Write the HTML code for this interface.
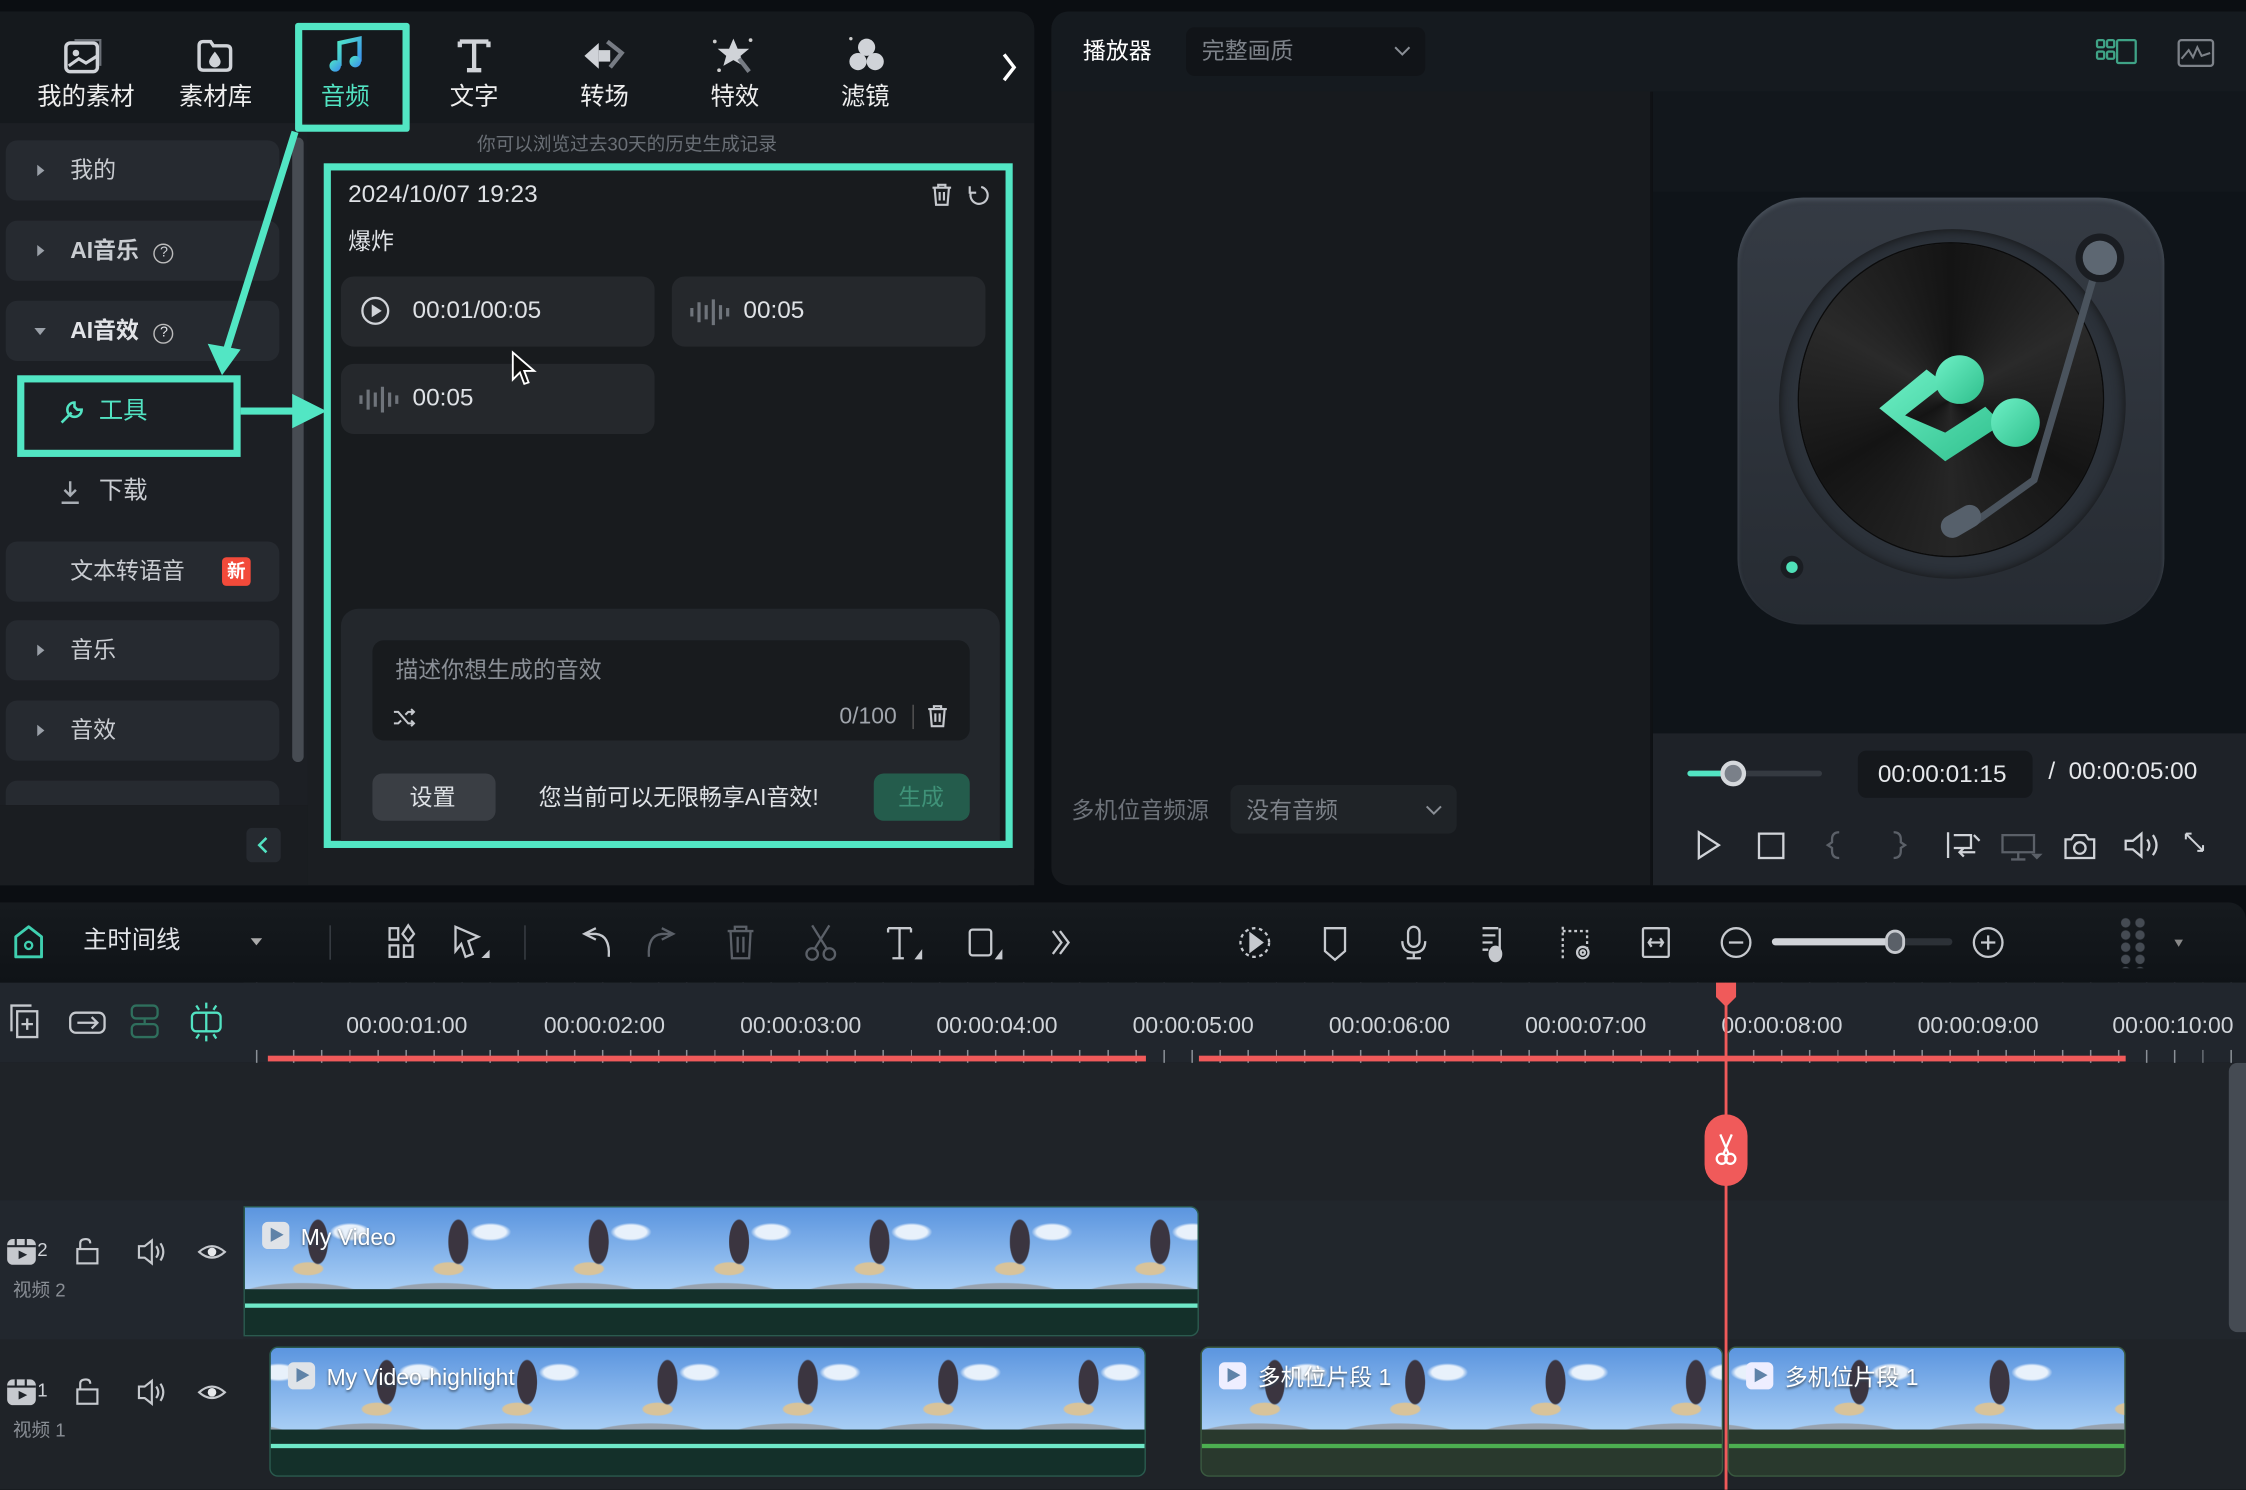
<!DOCTYPE html>
<html><head><meta charset="utf-8">
<style>
*{margin:0;padding:0;box-sizing:border-box}
html,body{width:2246px;height:1490px;overflow:hidden;background:#0b0e12}
#s{position:absolute;left:0;top:0;width:1568px;height:1040px;transform:scale(1.43240);transform-origin:0 0;font-family:"Liberation Sans","Noto Sans CJK SC",sans-serif;color:#d6d9de;line-height:1.2}
.a{position:absolute}
.t{position:absolute;white-space:nowrap;line-height:1.2}
svg{position:absolute;overflow:visible}
.side{position:absolute;left:4px;width:191px;height:42px;background:#262a30;border-radius:8px}
.side .t{left:45px;top:12px;font-size:16px;color:#c9ccd1}
.tri{position:absolute;left:22px;top:17px;width:0;height:0;border-left:5px solid #9aa0a8;border-top:4px solid transparent;border-bottom:4px solid transparent}
.card{position:absolute;background:#25282c;border-radius:9px;width:219px;height:49px}
.card .t{left:50px;top:14px;font-size:17px;color:#dfe2e6}
.th{position:absolute;overflow:hidden;
background:
radial-gradient(ellipse 9px 20px at 52% 42%,#3b3540 75%,transparent 80%) 0 0/98px 100%,
radial-gradient(ellipse 14px 6px at 45% 75%,#d8c39a 70%,transparent 80%) 0 0/98px 100%,
radial-gradient(ellipse 18px 8px at 75% 30%,#e8f1fb 60%,transparent 80%) 0 0/98px 100%,
radial-gradient(ellipse 50px 12px at 40% 112%,#98a2ae 90%,transparent 95%) 0 0/98px 100%,
linear-gradient(#5b95df,#a8cef5)}
.lbl{position:absolute;left:12px;top:10px;font-size:16px;color:#fff;text-shadow:0 1px 2px #345;line-height:1.2}
.pb{display:inline-block;width:19px;height:19px;background:#dfe3e8;border-radius:4px;vertical-align:-3px;margin-right:8px;position:relative}
.pb:after{content:"";position:absolute;left:6px;top:4px;border-left:9px solid #5f83a8;border-top:5.5px solid transparent;border-bottom:5.5px solid transparent}
.rl{position:absolute;top:707px;font-size:16px;color:#d0d4d9;transform:translateX(-50%);line-height:1.2}
</style></head><body><div id="s">

<!-- LEFT PANEL -->
<div class="a" style="left:0;top:8px;width:722px;height:610px;background:#1c1f24;border-radius:0 12px 12px 0"></div>
<div class="a" style="left:0;top:8px;width:722px;height:78px;background:#15191d;border-radius:0 12px 0 0"></div>
<!-- tabs -->
<svg style="left:44px;top:26px" width="28" height="26" viewBox="0 0 28 26"><rect x="2" y="4" width="22" height="20" rx="3" fill="none" stroke="#d0d3d8" stroke-width="2.4"/><circle cx="9" cy="11" r="2.3" fill="#d0d3d8"/><path d="M4 20 L11 15 L16 18 L24 13" fill="none" stroke="#d0d3d8" stroke-width="2.2"/><path d="M8 2 H26 V20" fill="none" stroke="#6a6f76" stroke-width="1.6"/></svg>
<div class="t" style="left:26px;top:58px;font-size:17px;color:#eee">我的素材</div>
<svg style="left:137px;top:26px" width="26" height="26" viewBox="0 0 26 26"><path d="M2 6 Q2 3 5 3 H10 L12 6 H21 Q24 6 24 9 V20 Q24 23 21 23 H5 Q2 23 2 20 Z" fill="none" stroke="#d0d3d8" stroke-width="2.4"/><path d="M13 10 Q9 15 9 17 A4 4 0 0 0 17 17 Q17 15 13 10Z" fill="#d0d3d8"/></svg>
<div class="t" style="left:125px;top:58px;font-size:17px;color:#eee">素材库</div>
<svg style="left:228px;top:25px" width="28" height="28" viewBox="0 0 28 28"><defs><linearGradient id="mg" x1="0" y1="0" x2="1" y2="1"><stop offset="0" stop-color="#4fe6c6"/><stop offset="1" stop-color="#3a8cf0"/></linearGradient></defs><path d="M9 21 V5 L23 2 V18" fill="none" stroke="url(#mg)" stroke-width="3"/><ellipse cx="6" cy="21" rx="4" ry="4" fill="url(#mg)"/><ellipse cx="20" cy="18" rx="4" ry="4" fill="url(#mg)"/></svg>
<div class="t" style="left:224px;top:58px;font-size:17px;color:#52e3c2">音频</div>
<svg style="left:318px;top:26px" width="26" height="26"><path d="M3 3 H23 M13 3 V23 M8 23 H18 M3 3 V7 M23 3 V7" stroke="#d0d3d8" stroke-width="3" fill="none"/></svg>
<div class="t" style="left:314px;top:58px;font-size:17px;color:#eee">文字</div>
<svg style="left:406px;top:25px" width="34" height="28"><path d="M2 14 L12 5 V23 Z" fill="#d0d3d8"/><path d="M12 10 H20 V18 H12" fill="#d0d3d8"/><path d="M18 4 L28 12 L20 22" fill="none" stroke="#777c84" stroke-width="3"/></svg>
<div class="t" style="left:405px;top:58px;font-size:17px;color:#eee">转场</div>
<svg style="left:496px;top:24px" width="32" height="30"><path d="M16 3 L19 10 L27 10 L21 15 L23 22 L16 18 L9 22 L11 15 L5 10 L13 10Z" fill="#d0d3d8"/><path d="M20 17 L27 26" stroke="#777c84" stroke-width="3"/><circle cx="3" cy="5" r="1.3" fill="#ccc"/><circle cx="28" cy="4" r="1.3" fill="#ccc"/><circle cx="6" cy="25" r="1.3" fill="#ccc"/></svg>
<div class="t" style="left:496px;top:58px;font-size:17px;color:#eee">特效</div>
<svg style="left:590px;top:24px" width="30" height="30"><circle cx="15" cy="9" r="6" fill="#d0d3d8"/><circle cx="9" cy="19" r="6" fill="#d0d3d8"/><circle cx="21" cy="19" r="6" fill="#d0d3d8"/><circle cx="4" cy="3" r="1.2" fill="#ccc"/></svg>
<div class="t" style="left:587px;top:58px;font-size:17px;color:#eee">滤镜</div>
<svg style="left:698px;top:36px" width="14" height="22"><path d="M3 2 L10 11 L3 20" fill="none" stroke="#fff" stroke-width="2.4"/></svg>

<!-- sidebar -->
<div class="a" style="left:0;top:86px;width:215px;height:532px;background:#1c1f24"></div>
<div class="side" style="top:98px"><div class="tri"></div><div class="t">我的</div></div>
<div class="side" style="top:154px"><div class="tri"></div><div class="t" style="font-weight:bold">AI音乐 <span style="font-weight:normal;display:inline-block;width:14px;height:14px;border:1.5px solid #bbb;border-radius:50%;font-size:10px;text-align:center;line-height:11px;margin-left:6px;vertical-align:1px">?</span></div></div>
<div class="side" style="top:210px"><div class="tri" style="border-left:4px solid transparent;border-right:4px solid transparent;border-top:5px solid #9aa0a8;border-bottom:0;top:19px;left:20px"></div><div class="t" style="font-weight:bold;color:#e2e4e8">AI音效 <span style="font-weight:normal;display:inline-block;width:14px;height:14px;border:1.5px solid #bbb;border-radius:50%;font-size:10px;text-align:center;line-height:11px;margin-left:6px;vertical-align:1px">?</span></div></div>
<div class="a" style="left:12px;top:262px;width:156px;height:57px;border:5px solid #52e6c4;background:#1c1f24"></div>
<svg style="left:40px;top:278px" width="20" height="20"><path d="M3 17 L10 10 M12 3 A5 5 0 1 0 17 8 L14 8 L12 6 Z" fill="none" stroke="#52e3c2" stroke-width="1.8"/></svg>
<div class="t" style="left:69px;top:277px;font-size:17px;color:#52e3c2">工具</div>
<svg style="left:40px;top:334px" width="18" height="20"><path d="M9 2 V11 M5 8 L9 12 L13 8 M3 17 H15" fill="none" stroke="#a8adb4" stroke-width="1.7"/></svg>
<div class="t" style="left:69px;top:333px;font-size:17px;color:#c9ccd1">下载</div>
<div class="side" style="top:378px"><div class="t">文本转语音</div><div class="a" style="left:151px;top:11px;width:20px;height:20px;background:#f24a3a;border-radius:3px;color:#fff;font-size:13px;text-align:center;line-height:20px;font-weight:bold">新</div></div>
<div class="side" style="top:433px"><div class="tri"></div><div class="t">音乐</div></div>
<div class="side" style="top:489px"><div class="tri"></div><div class="t">音效</div></div>
<div class="side" style="top:545px;height:17px;border-radius:8px 8px 0 0"></div>
<div class="a" style="left:204px;top:96px;width:8px;height:436px;background:#474c53;border-radius:4px"></div>
<div class="a" style="left:0;top:562px;width:215px;height:56px;background:#1a1d21"></div>
<div class="a" style="left:172px;top:578px;width:24px;height:24px;background:#262a30;border-radius:4px"></div>
<svg style="left:179px;top:584px" width="10" height="12"><path d="M7 1 L2 6 L7 11" stroke="#52e3c2" stroke-width="1.8" fill="none"/></svg>

<!-- main content -->
<div class="a" style="left:215px;top:86px;width:507px;height:532px;background:#1b1e22"></div>
<!-- tab highlight box (on top) -->
<div class="a" style="left:206px;top:16px;width:80px;height:76px;border:5px solid #52e6c4;border-radius:2px"></div>
<div class="t" style="left:333px;top:93px;font-size:13px;color:#6a6f76">你可以浏览过去30天的历史生成记录</div>
<div class="a" style="left:226px;top:114px;width:481px;height:478px;border:5px solid #52e6c4;background:#181b1e"></div>
<div class="t" style="left:243px;top:126px;font-size:17px;color:#dfe2e6">2024/10/07 19:23</div>
<svg style="left:649px;top:127px" width="42" height="18"><path d="M2 4 H15 M6 4 V2 H11 V4 M3.5 4 L4.5 16 H12.5 L13.5 4 M7 7 V13 M10 7 V13" fill="none" stroke="#c6c9ce" stroke-width="1.5"/><path d="M36 3.5 A6 6 0 1 1 29 7 M28 3 V7.5 H32.5" fill="none" stroke="#c6c9ce" stroke-width="1.5"/></svg>
<div class="t" style="left:243px;top:160px;font-size:16px;color:#dfe2e6">爆炸</div>
<div class="card" style="left:238px;top:193px"><svg style="left:14px;top:14px" width="22" height="22"><circle cx="10" cy="10" r="9" fill="none" stroke="#d0d3d8" stroke-width="1.6"/><path d="M7.5 5.5 L14.5 10 L7.5 14.5Z" fill="#d0d3d8"/></svg><div class="t">00:01/00:05</div></div>
<div class="card" style="left:469px;top:193px"><svg style="left:12px;top:15px" width="28" height="20"><path d="M2 7 V13 M7 3 V17 M12 5 V15 M17 1 V19 M22 5 V15 M27 7 V13" stroke="#6f747b" stroke-width="2.2"/></svg><div class="t">00:05</div></div>
<div class="card" style="left:238px;top:254px"><svg style="left:12px;top:15px" width="28" height="20"><path d="M2 7 V13 M7 3 V17 M12 5 V15 M17 1 V19 M22 5 V15 M27 7 V13" stroke="#6f747b" stroke-width="2.2"/></svg><div class="t">00:05</div></div>
<svg style="left:357px;top:245px" width="20" height="28"><path d="M1 1 L1 20 L6 15 L9 23 L12 22 L9 14 L16 14 Z" fill="#111" stroke="#fff" stroke-width="1.3"/></svg>
<div class="a" style="left:238px;top:425px;width:460px;height:162px;background:#23272c;border-radius:12px 12px 0 0"></div>
<div class="a" style="left:260px;top:447px;width:417px;height:70px;background:#181b1e;border-radius:8px"></div>
<div class="t" style="left:276px;top:459px;font-size:16px;color:#8a8f96">描述你想生成的音效</div>
<svg style="left:274px;top:493px" width="16" height="16"><path d="M1 4 H4 L11 12 H15 M1 12 H4 L6 10 M9 6 L11 4 H15 M13 2 L15 4 L13 6 M13 10 L15 12 L13 14" fill="none" stroke="#c6c9ce" stroke-width="1.4"/></svg>
<div class="t" style="left:586px;top:491px;font-size:16px;color:#a0a5ac">0/100</div>
<div class="a" style="left:637px;top:492px;width:1px;height:17px;background:#555"></div>
<svg style="left:646px;top:491px" width="18" height="18"><path d="M2 4 H15 M6 4 V2 H11 V4 M3.5 4 L4.5 16 H12.5 L13.5 4 M7 7 V13 M10 7 V13" fill="none" stroke="#c6c9ce" stroke-width="1.5"/></svg>
<div class="a" style="left:260px;top:540px;width:86px;height:33px;background:#3a3e44;border-radius:7px"></div>
<div class="t" style="left:286px;top:548px;font-size:16px;color:#dfe2e6">设置</div>
<div class="t" style="left:376px;top:548px;font-size:16px;color:#dfe2e6">您当前可以无限畅享AI音效!</div>
<div class="a" style="left:610px;top:540px;width:67px;height:33px;background:#245c4c;border-radius:7px"></div>
<div class="t" style="left:627px;top:548px;font-size:16px;color:#3f9278">生成</div>

<!-- arrows -->
<svg style="left:0;top:0" width="240" height="320"><path d="M206 92 L157 248" stroke="#52e6c4" stroke-width="5"/><path d="M145 240 L155 262 L168 244 Z" fill="#52e6c4"/><path d="M168 287 L210 287" stroke="#52e6c4" stroke-width="5"/><path d="M204 275 L228 287 L204 299 Z" fill="#52e6c4"/></svg>

<!-- PLAYER -->
<div class="a" style="left:734px;top:8px;width:834px;height:610px;background:#171a1e;border-radius:12px 0 0 12px;overflow:hidden"></div>
<div class="a" style="left:734px;top:8px;width:834px;height:56px;background:#151a1f;border-radius:12px 0 0 0"></div>
<div class="t" style="left:756px;top:27px;font-size:16px;color:#fff">播放器</div>
<div class="a" style="left:828px;top:19px;width:167px;height:34px;background:#111418;border-radius:6px"></div>
<div class="t" style="left:839px;top:27px;font-size:16px;color:#7d8289">完整画质</div>
<svg style="left:973px;top:32px" width="12" height="8"><path d="M1 1 L6 6 L11 1" stroke="#8a8f96" stroke-width="1.4" fill="none"/></svg>
<svg style="left:1463px;top:27px" width="30" height="20"><g fill="none" stroke="#3fa386" stroke-width="1.6"><rect x="1" y="1" width="5" height="5" rx="1"/><rect x="8" y="1" width="5" height="5" rx="1"/><rect x="1" y="9" width="5" height="5" rx="1"/><rect x="8" y="9" width="5" height="5" rx="1"/><rect x="15" y="1" width="13" height="16" rx="1"/></g></svg>
<svg style="left:1520px;top:27px" width="26" height="20"><rect x="1" y="1" width="24" height="18" rx="2" fill="none" stroke="#7d8289" stroke-width="1.6"/><path d="M3 14 L8 8 L11 13 L14 6 L17 12 L23 10" fill="none" stroke="#7d8289" stroke-width="1.4"/></svg>
<div class="a" style="left:1152px;top:64px;width:2px;height:554px;background:#0f1215"></div>
<div class="a" style="left:1154px;top:64px;width:414px;height:448px;background:#0f1419"></div>
<div class="a" style="left:1154px;top:64px;width:414px;height:70px;background:#12171c"></div>
<!-- turntable -->
<div class="a" style="left:1213px;top:138px;width:298px;height:298px;border-radius:46px;background:linear-gradient(#353b44,#262b32);box-shadow:inset 0 2px 3px #48505a"></div>
<div class="a" style="left:1242px;top:160px;width:242px;height:244px;border-radius:50%;background:#2c323a;box-shadow:inset 0 0 8px #111"></div>
<div class="a" style="left:1256px;top:170px;width:212px;height:218px;border-radius:50%;background:conic-gradient(#141414,#2a2a2a,#141414,#262626,#141414,#2a2a2a,#141414);box-shadow:0 0 0 1px #0b0b0b"></div>
<svg style="left:1300px;top:240px" width="140" height="100"><defs><linearGradient id="ng" x1="0" y1="0" x2="1" y2="1"><stop offset="0" stop-color="#6ef0c6"/><stop offset="1" stop-color="#2fbf8c"/></linearGradient></defs><path d="M12 45 L45 18 L58 28 L30 50 L58 62 L86 44 L98 56 L58 82 Z" fill="url(#ng)"/><circle cx="68" cy="25" r="17" fill="url(#ng)"/><circle cx="107" cy="55" r="17" fill="url(#ng)"/></svg>
<svg style="left:1340px;top:160px" width="150" height="230"><path d="M125 22 L80 175 L38 205" stroke="#4a535d" stroke-width="5" fill="none"/><circle cx="126" cy="20" r="17" fill="#1a1d22"/><circle cx="126" cy="20" r="12" fill="#5d6772"/><rect x="14" y="196" width="30" height="16" rx="8" fill="#56606b" transform="rotate(-30 29 204)"/></svg>
<div class="a" style="left:1243px;top:388px;width:16px;height:16px;border-radius:50%;background:#1a1d22"></div>
<div class="a" style="left:1247px;top:392px;width:8px;height:8px;border-radius:50%;background:#4fe0b8"></div>
<!-- controls -->
<div class="a" style="left:1154px;top:512px;width:414px;height:106px;background:#1e2228"></div>
<div class="a" style="left:1178px;top:538px;width:94px;height:4px;background:#353a41;border-radius:2px"></div>
<div class="a" style="left:1178px;top:538px;width:32px;height:4px;background:#52e3c2;border-radius:2px"></div>
<div class="a" style="left:1201px;top:531px;width:18px;height:18px;border-radius:50%;background:#7a8089;border:3px solid #d5d8dc"></div>
<div class="a" style="left:1297px;top:524px;width:122px;height:33px;background:#15181c;border-radius:6px"></div>
<div class="t" style="left:1311px;top:531px;font-size:17px;color:#e6e8eb">00:00:01:15</div>
<div class="t" style="left:1430px;top:529px;font-size:17px;color:#e6e8eb">/&nbsp; 00:00:05:00</div>
<svg style="left:1182px;top:578px" width="370" height="26"><g fill="none" stroke="#d0d3d8" stroke-width="1.6"><path d="M4 3 L18 12 L4 21Z"/><rect x="46" y="4" width="17" height="17"/><path d="M102 3 Q97 3 97 8 V10 L94 12 L97 14 V16 Q97 21 102 21" stroke="#5b6068"/><path d="M140 3 Q145 3 145 8 V10 L148 12 L145 14 V16 Q145 21 140 21" stroke="#5b6068"/><path d="M178 3 V21 M182 5 H194 V14 H182 M186 17 H197 M189 14 L186 17 L189 20 M196 5 L200 9"/><path d="M216 5 H238 V17 H216Z M227 17 V22 M222 22 H232" stroke="#5b6068"/><path d="M236 18 L240 22 L244 18Z" fill="#5b6068" stroke="none"/><path d="M260 8 H264 L266 5 H274 L276 8 H280 V21 H260Z"/><circle cx="270" cy="14" r="4"/><path d="M302 9 H307 L313 4 V20 L307 15 H302Z M317 8 Q320 12 317 16 M321 5 Q326 12 321 19"/><path d="M344 4 L356 16 M344 4 V8 M344 4 H348 M356 16 V12 M356 16 H352" stroke-width="1.4"/></g></svg>
<div class="t" style="left:748px;top:557px;font-size:16px;color:#6d7279">多机位音频源</div>
<div class="a" style="left:859px;top:548px;width:158px;height:34px;background:#1f2327;border-radius:6px"></div>
<div class="t" style="left:870px;top:557px;font-size:16px;color:#7d8289">没有音频</div>
<svg style="left:995px;top:562px" width="12" height="8"><path d="M1 1 L6 6 L11 1" stroke="#8a8f96" stroke-width="1.4" fill="none"/></svg>

<!-- TIMELINE TOOLBAR -->
<div class="a" style="left:0;top:630px;width:1568px;height:56px;background:linear-gradient(#161a1e,#0f1317);border-radius:0 12px 0 0"></div>
<svg style="left:9px;top:645px" width="22" height="26"><path d="M11 2 L20 9 V23 H2 V9 Z" fill="none" stroke="#3fd0b0" stroke-width="2" stroke-linejoin="round"/><circle cx="11" cy="15" r="2.5" fill="none" stroke="#3fd0b0" stroke-width="1.6"/></svg>
<div class="t" style="left:58px;top:647px;font-size:17px;color:#e2e4e8">主时间线</div>
<div class="a" style="left:175px;top:655px;border-top:5px solid #aaa;border-left:4px solid transparent;border-right:4px solid transparent"></div>
<div class="a" style="left:230px;top:646px;width:1px;height:24px;background:#3a3f45"></div>
<div class="a" style="left:366px;top:646px;width:1px;height:24px;background:#3a3f45"></div>
<svg style="left:270px;top:644px" width="490" height="30"><g fill="none" stroke="#c6c9ce" stroke-width="1.6"><rect x="2" y="4" width="6" height="8"/><rect x="2" y="16" width="6" height="8"/><rect x="12" y="16" width="6" height="8"/><path d="M15 2 L19 8 L15 13 L11 8Z"/><path d="M48 3 L64 10 L57 13 L60 22 L55 24 L52 15 L48 20Z"/><path d="M68 24 L71 24 L71 21Z" fill="#c6c9ce"/><path d="M146 12 L138 8 L146 4 M138 8 H146 Q156 9 155 24"/><path d="M192 12 L200 8 L192 4 M200 8 H192 Q182 9 183 24" stroke="#5b6068"/><path d="M238 6 H256 M243 6 V3 H251 V6 M240 6 L241 25 H253 L254 6 M245 10 V21 M249 10 V21" stroke="#5b6068"/><path d="M297 2 L307 18 M309 2 L299 18" stroke="#5b6068"/><circle cx="297" cy="22" r="4" stroke="#5b6068"/><circle cx="309" cy="22" r="4" stroke="#5b6068"/><path d="M350 4 H366 M358 4 V25 M353 25 H361 M350 4 V7 M366 4 V7"/><path d="M370 25 L373 25 L373 21Z" fill="#c6c9ce"/><rect x="407" y="5" width="15" height="18" rx="2"/><path d="M426 25 L429 25 L429 21Z" fill="#c6c9ce"/><path d="M465 6 L471 14 L465 22 M470 6 L476 14 L470 22"/></g></svg>
<svg style="left:862px;top:644px" width="680" height="30"><g fill="none" stroke="#c6c9ce" stroke-width="1.6"><circle cx="14" cy="14" r="10" stroke-dasharray="2.5 2.5"/><path d="M11 8 L19 14 L11 20Z" fill="#c6c9ce"/><path d="M63 4 H77 V20 L70 26 L63 20Z"/><rect x="121" y="3" width="8" height="14" rx="4"/><path d="M117 13 Q117 21 125 21 Q133 21 133 13 M125 21 V25 M120 25 H130"/><path d="M173 4 H184 M173 9 H182 M173 14 H180 M173 19 H177 M185 4 V20"/><ellipse cx="182" cy="22" rx="4" ry="5" fill="#c6c9ce"/><path d="M229 3 V27 M229 6 H246 V18" stroke-dasharray="2 2"/><circle cx="243" cy="21" r="4"/><circle cx="243" cy="21" r="1.5"/><rect x="285" y="4" width="18" height="20" rx="1"/><path d="M289 14 H299 M291 11 L289 14 L291 17 M297 11 L299 14 L297 17"/><circle cx="350" cy="14" r="10"/><path d="M345 14 H355"/><circle cx="526" cy="14" r="10"/><path d="M521 14 H531 M526 9 V19"/></g></svg>
<div class="a" style="left:1237px;top:655px;width:126px;height:5px;background:#2c3137;border-radius:3px"></div>
<div class="a" style="left:1237px;top:655px;width:86px;height:5px;background:#d0d3d8;border-radius:3px"></div>
<div class="a" style="left:1316px;top:649px;width:14px;height:17px;background:#5a6068;border:2px solid #c6c9ce;border-radius:7px"></div>
<div class="a" style="left:1479px;top:640px;width:20px;height:36px;background:radial-gradient(circle,#454b53 3px,transparent 3.5px) 0 0/10px 8.5px"></div>
<div class="a" style="left:1518px;top:656px;border-top:5px solid #888;border-left:3px solid transparent;border-right:3px solid transparent"></div>

<!-- RULER -->
<div class="a" style="left:0;top:686px;width:1568px;height:56px;background:#21262d"></div>
<div class="a" style="left:0;top:742px;width:1568px;height:298px;background:#1f2328"></div>
<svg style="left:6px;top:700px" width="150" height="28"><g fill="none" stroke-width="1.6"><g stroke="#c6c9ce"><rect x="6" y="6" width="14" height="18"/><path d="M2 20 V2 H16 M13 11 V19 M9 15 H17"/><rect x="43" y="7" width="24" height="14" rx="4"/><path d="M48 14 H62 M58 10 L62 14 L58 18"/></g><g stroke="#2f6f5d"><rect x="86" y="2" width="18" height="9" rx="3"/><rect x="86" y="15" width="18" height="9" rx="3"/><path d="M95 11 V15"/></g><g stroke="#52e3c2"><rect x="128" y="7" width="20" height="13" rx="3"/><path d="M138 7 V20 M138 0 V4 M138 23 V27 M131 2 L133 5 M145 2 L143 5 M131 25 L133 22 M145 25 L143 22"/></g></g></svg>
<div class="a" style="left:170px;top:686px;width:1398px;height:56px;background:
linear-gradient(#21262d,#21262d) 0 0/100% 47px no-repeat,
repeating-linear-gradient(90deg,transparent 0 18.6px,#8a9097 18.6px 19.6px) 16px 0/100% 100%"></div>
<div class="rl" style="left:284px">00:00:01:00</div><div class="rl" style="left:422px">00:00:02:00</div><div class="rl" style="left:559px">00:00:03:00</div><div class="rl" style="left:696px">00:00:04:00</div><div class="rl" style="left:833px">00:00:05:00</div><div class="rl" style="left:970px">00:00:06:00</div><div class="rl" style="left:1107px">00:00:07:00</div><div class="rl" style="left:1244px">00:00:08:00</div><div class="rl" style="left:1381px">00:00:09:00</div><div class="rl" style="left:1517px">00:00:10:00</div>
<div class="a" style="left:187px;top:737px;width:613px;height:4px;background:#f05a5a"></div>
<div class="a" style="left:837px;top:737px;width:647px;height:4px;background:#f05a5a"></div>

<!-- tracks -->
<div class="a" style="left:0;top:838px;width:170px;height:97px;background:#22272e"></div>
<div class="a" style="left:170px;top:838px;width:1398px;height:97px;background:#21262c"></div>
<svg style="left:4px;top:862px" width="160" height="24"><g><rect x="1" y="3" width="20" height="18" rx="4" fill="#c6c9ce"/><path d="M1 8 H21 M7 3 V8 M14 3 V8" stroke="#22272e" stroke-width="1.5"/><path d="M9 11 L15 14 L9 17Z" fill="#22272e"/></g><text x="22" y="15" font-size="13" fill="#d0d3d8" font-family="Liberation Sans">2</text><g fill="none" stroke="#c6c9ce" stroke-width="1.5"><rect x="50" y="10" width="14" height="10"/><path d="M52 10 V6 Q52 3 56 3 Q59 3 59 6"/><path d="M93 8 H97 L102 4 V20 L97 16 H93Z M105 8 Q108 12 105 16 M108 6 Q112 12 108 18"/><path d="M135 12 Q144 4 153 12 Q144 20 135 12Z"/></g><circle cx="144" cy="12" r="3" fill="#e6e8eb"/></svg>
<div class="t" style="left:9px;top:893px;font-size:13px;color:#8a8f96">视频 2</div>
<svg style="left:4px;top:960px" width="160" height="24"><g><rect x="1" y="3" width="20" height="18" rx="4" fill="#c6c9ce"/><path d="M1 8 H21 M7 3 V8 M14 3 V8" stroke="#1f2328" stroke-width="1.5"/><path d="M9 11 L15 14 L9 17Z" fill="#1f2328"/></g><text x="22" y="15" font-size="13" fill="#d0d3d8" font-family="Liberation Sans">1</text><g fill="none" stroke="#c6c9ce" stroke-width="1.5"><rect x="50" y="10" width="14" height="10"/><path d="M52 10 V6 Q52 3 56 3 Q59 3 59 6"/><path d="M93 8 H97 L102 4 V20 L97 16 H93Z M105 8 Q108 12 105 16 M108 6 Q112 12 108 18"/><path d="M135 12 Q144 4 153 12 Q144 20 135 12Z"/></g><circle cx="144" cy="12" r="3" fill="#e6e8eb"/></svg>
<div class="t" style="left:9px;top:991px;font-size:13px;color:#8a8f96">视频 1</div>

<!-- clips -->
<div class="a" style="left:170px;top:842px;width:667px;height:91px;background:#14302a;border:1px solid #2a5a4e;border-radius:0 6px 6px 0;overflow:hidden">
 <div class="th" style="left:0;top:0;width:667px;height:57px"></div>
 <div class="a" style="left:0;top:67px;width:667px;height:3px;background:#6fe8c8"></div>
 <div class="lbl"><span class="pb"></span>My Video</div>
</div>
<div class="a" style="left:188px;top:940px;width:612px;height:91px;background:#14302a;border:1px solid #2a5a4e;border-radius:6px;overflow:hidden">
 <div class="th" style="left:0;top:0;width:612px;height:57px;background-position:30px 0,30px 0,30px 0,30px 0,0 0"></div>
 <div class="a" style="left:0;top:67px;width:612px;height:3px;background:#6fe8c8"></div>
 <div class="lbl"><span class="pb"></span>My Video-highlight</div>
</div>
<div class="a" style="left:838px;top:940px;width:365px;height:91px;background:#29392d;border:1px solid #3a5a40;border-radius:6px;overflow:hidden">
 <div class="th" style="left:0;top:0;width:365px;height:57px"></div>
 <div class="a" style="left:0;top:67px;width:365px;height:3px;background:#4caf50"></div>
 <div class="lbl"><span class="pb" style="background:#eef"></span>多机位片段 1</div>
</div>
<div class="a" style="left:1206px;top:940px;width:278px;height:91px;background:#29392d;border:1px solid #3a5a40;border-radius:6px;overflow:hidden">
 <div class="th" style="left:0;top:0;width:278px;height:57px;background-position:40px 0,40px 0,40px 0,40px 0,0 0"></div>
 <div class="a" style="left:0;top:67px;width:278px;height:3px;background:#4caf50"></div>
 <div class="lbl"><span class="pb" style="background:#eef"></span>多机位片段 1</div>
</div>
<div class="a" style="left:1556px;top:742px;width:12px;height:188px;background:#454b53;border-radius:6px 0 0 6px"></div>

<!-- playhead -->
<div class="a" style="left:1204px;top:690px;width:2px;height:350px;background:#f05a5a"></div>
<svg style="left:1196px;top:686px" width="18" height="20"><path d="M2 0 H16 V10 L9 17 L2 10Z" fill="#f05a5a"/></svg>
<div class="a" style="left:1190px;top:778px;width:30px;height:50px;background:#f05a5a;border-radius:15px"></div>
<svg style="left:1193px;top:790px" width="24" height="26"><g fill="none" stroke="#fff" stroke-width="1.6"><path d="M8 2 L14 16 M16 2 L10 16"/><circle cx="9" cy="19" r="3.5"/><circle cx="15" cy="19" r="3.5"/></g></svg>

</div></body></html>
